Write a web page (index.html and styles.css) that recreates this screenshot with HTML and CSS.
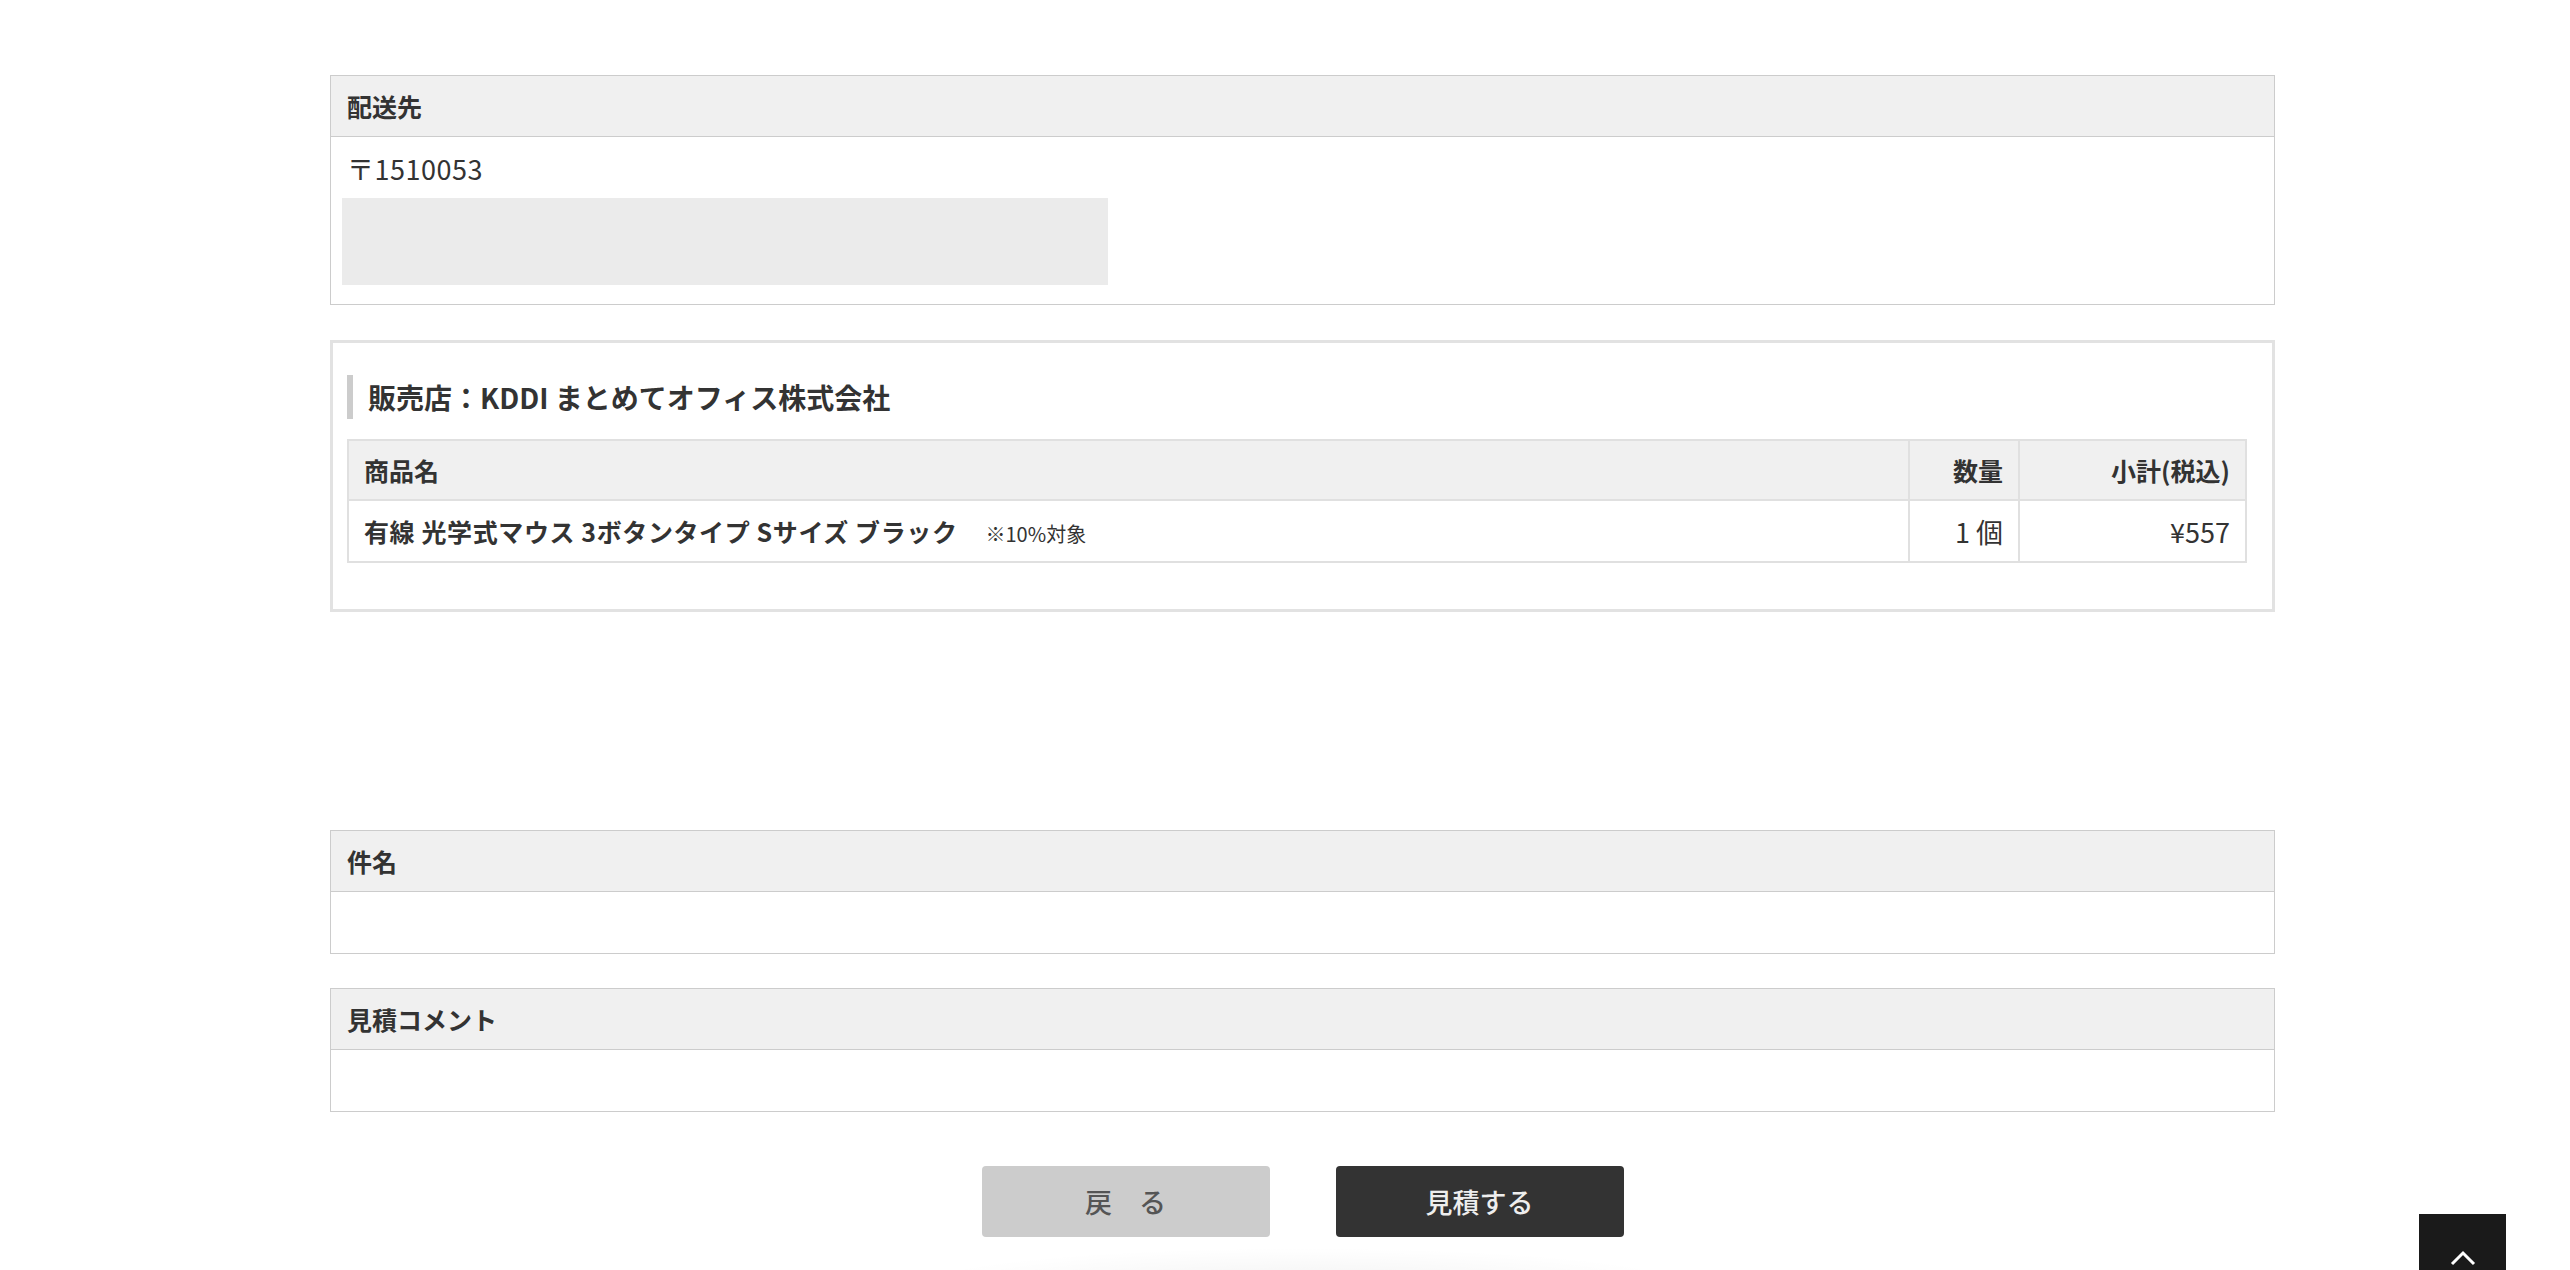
FILE: index.html
```html
<!DOCTYPE html>
<html lang="ja">
<head>
    <meta charset="UTF-8">
    <meta name="viewport" content="width=device-width, initial-scale=1.0">
    <title>見積確認</title>
    <link rel="stylesheet" href="styles.css">
</head>
<body>
    <div class="main">
        <div class="box">
            <div class="box-head">配送先</div>
            <div class="box-body address">
                <p class="zip">〒1510053</p>
                <div class="masked"></div>
            </div>
        </div>

        <div class="shop-box">
            <h3 class="shop-title">販売店：KDDI まとめてオフィス株式会社</h3>
            <table class="items">
                <thead>
                    <tr>
                        <th class="col-name">商品名</th>
                        <th class="col-qty">数量</th>
                        <th class="col-price">小計(税込)</th>
                    </tr>
                </thead>
                <tbody>
                    <tr>
                        <td class="col-name"><strong class="item-name">有線 光学式マウス 3ボタンタイプ Sサイズ ブラック</strong><span class="tax-note">※10%対象</span></td>
                        <td class="col-qty">1 個</td>
                        <td class="col-price">¥557</td>
                    </tr>
                </tbody>
            </table>
        </div>

        <div class="box subject">
            <div class="box-head">件名</div>
            <div class="box-body empty"></div>
        </div>

        <div class="box comment">
            <div class="box-head">見積コメント</div>
            <div class="box-body empty"></div>
        </div>

        <div class="actions">
            <button class="btn btn-back">戻　る</button>
            <button class="btn btn-submit">見積する</button>
        </div>
        <div class="footer-shade"></div>
    </div>

    <a class="pagetop" href="#">
        <svg width="26" height="16" viewBox="0 0 26 16"><polyline points="2,14 13,3 24,14" fill="none" stroke="#fff" stroke-width="3"/></svg>
    </a>
</body>
</html>
```

FILE: styles.css
```css
html,body{margin:0;padding:0;background:#fff}
body{font-family:"Noto Sans CJK JP","Noto Sans",sans-serif;color:#333;overflow:hidden;height:1270px}
.main{width:1945px;margin:0 0 0 330px;padding-top:75px}
.box{border:1px solid #ccc;background:#fff}
.box-head{height:60px;line-height:60px;padding:0 16px;background:#f0f0f0;border-bottom:1px solid #ccc;font-size:25px;font-weight:bold;color:#333}
.box-body.address{padding:12px 11px 19px}
.zip{margin:0;padding-left:5px;font-size:27px;line-height:40px;letter-spacing:0.5px}
.masked{width:766px;height:87px;margin-top:9px;background:#ebebeb}
.box-body.empty{height:61px}
.shop-box{margin-top:35px;border:3px solid #e2e2e2;padding:32px 25px 46px 14px}
.shop-title{margin:0 0 20px;border-left:6px solid #ccc;padding-left:15px;height:44px;line-height:44px;font-size:28px;font-weight:bold}
.items{width:100%;border-collapse:collapse;font-size:25px}
.items th,.items td{border:2px solid #e0e0e0;padding:0 15px}
.items th{height:58px;background:#f0f0f0;font-weight:bold;text-align:left}
.items td{height:60px}
.items .col-qty{width:78px;text-align:right}
.items .col-price{width:195px;text-align:right}
.items td.col-qty,.items td.col-price{font-size:27px}
.item-name{letter-spacing:0.6px}
.tax-note{margin-left:28px;font-size:20px}
.subject{margin-top:218px}
.comment{margin-top:34px}
.actions{display:flex;justify-content:center;gap:66px;margin-top:54px}
.btn{width:288px;height:71px;border:none;border-radius:4px;font-family:inherit;font-size:27px;font-weight:500;cursor:pointer}
.btn-back{background:#ccc;color:#555}
.btn-submit{background:#333;color:#eee}
.footer-shade{width:800px;height:40px;margin:10px auto 0;background:radial-gradient(ellipse at 50% 100%,rgba(0,0,0,0.05),rgba(0,0,0,0) 70%)}
.pagetop{position:fixed;right:64px;bottom:-31px;width:87px;height:87px;background:#1a1a1a;display:flex;align-items:center;justify-content:center}
```
